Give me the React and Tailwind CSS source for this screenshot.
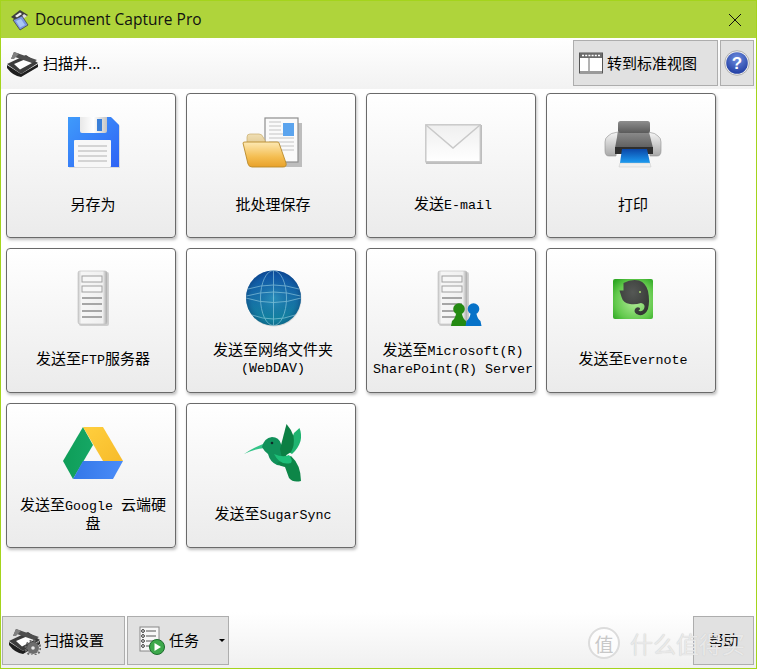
import React from "react";

const L = ({ children }) => (
  <span className="font-['Liberation_Mono',monospace] text-[13.33px] leading-none">{children}</span>
);

const Floppy = () => (
  <svg width="64" height="64" viewBox="0 0 64 64">
    <defs>
      <linearGradient id="fl1" x1="0" y1="0" x2="1" y2="1"><stop offset="0" stopColor="#3f9bfb" /><stop offset="1" stopColor="#2f63f5" /></linearGradient>
      <linearGradient id="fl2" x1="0" y1="0" x2="1" y2="0"><stop offset="0" stopColor="#e8e8e8" /><stop offset="0.5" stopColor="#ffffff" /><stop offset="1" stopColor="#c4c4c4" /></linearGradient>
    </defs>
    <path d="M10 7H53L61 15V57H10Z" fill="#aaa" opacity="0.35" />
    <path d="M9 6H52L60 14V56H9Z" fill="url(#fl1)" />
    <path d="M21 6H48V20Q48 22 46 22H23Q21 22 21 20Z" fill="url(#fl2)" />
    <rect x="38" y="8" width="5" height="12" fill="#3a7fd8" />
    <rect x="15" y="29" width="37" height="27" rx="1" fill="#f7f7f7" />
    <path d="M19 35H48M19 40H48M19 45H48M19 50H48" stroke="#c9c9c9" strokeWidth="1.6" />
  </svg>
);

const FolderDoc = () => (
  <svg width="64" height="64" viewBox="0 0 64 64">
    <defs>
      <linearGradient id="fo1" x1="0" y1="0" x2="0" y2="1"><stop offset="0" stopColor="#fde9b4" /><stop offset="0.6" stopColor="#f4bd50" /><stop offset="1" stopColor="#e8a12a" /></linearGradient>
      <linearGradient id="fo2" x1="0" y1="0" x2="0" y2="1"><stop offset="0" stopColor="#f0dfb4" /><stop offset="1" stopColor="#dcc288" /></linearGradient>
    </defs>
    <rect x="29" y="12" width="34" height="44" fill="#bdbdbd" />
    <rect x="26" y="7" width="33" height="44" fill="#fafafa" stroke="#8e8e8e" strokeWidth="1.2" />
    <path d="M30 11H42M30 15H42M30 19H42M30 23H55M30 27H55M30 31H55M30 35H55M30 39H55" stroke="#c4c4c4" strokeWidth="1" />
    <rect x="44" y="12" width="11" height="13" fill="#5ba4ee" />
    <path d="M8 38V26Q8 23 11 23H20Q23 23 24 26L26 29V38Z" fill="url(#fo2)" stroke="#c9ad6e" strokeWidth="0.7" />
    <path d="M4 32Q4 31 6 31H38Q40 31 40 32L47 52Q48 56 44 56H13Q10 56 9 53Z" fill="url(#fo1)" stroke="#b98a2a" strokeWidth="0.9" />
  </svg>
);

const Envelope = () => (
  <svg width="64" height="64" viewBox="0 0 64 64">
    <defs>
      <linearGradient id="en1" x1="0" y1="0" x2="0" y2="1"><stop offset="0" stopColor="#efefef" /><stop offset="1" stopColor="#ffffff" /></linearGradient>
    </defs>
    <rect x="7" y="14" width="56" height="39" fill="#bdbdbd" />
    <rect x="6.8" y="13.8" width="54.5" height="37" fill="url(#en1)" stroke="#c6c6c6" strokeWidth="1.4" />
    <path d="M7 14L34 37L61 14" fill="none" stroke="#c9c9c9" strokeWidth="1.5" />
  </svg>
);

const Printer = () => (
  <svg width="64" height="64" viewBox="0 0 64 64">
    <defs>
      <linearGradient id="pr1" x1="0" y1="0" x2="0" y2="1"><stop offset="0" stopColor="#8e8e8e" /><stop offset="1" stopColor="#5a5a5a" /></linearGradient>
      <linearGradient id="pr2" x1="0" y1="0" x2="0" y2="1"><stop offset="0" stopColor="#f6f6f6" /><stop offset="1" stopColor="#a8a8a8" /></linearGradient>
      <linearGradient id="pr3" x1="0" y1="0" x2="0" y2="1"><stop offset="0" stopColor="#0b47a8" /><stop offset="1" stopColor="#1c9cf2" /></linearGradient>
      <linearGradient id="pr4" x1="0" y1="0" x2="0" y2="1"><stop offset="0" stopColor="#8c8c8c" /><stop offset="1" stopColor="#5e5e5e" /></linearGradient>
    </defs>
    <path d="M9 25Q11 22 19 21L17 45H10Q6 45 6 40V31Q6 27 9 25Z" fill="url(#pr2)" stroke="#8f8f8f" strokeWidth="0.6" />
    <path d="M59 25Q57 22 49 21L51 45H58Q62 45 62 40V31Q62 27 59 25Z" fill="url(#pr2)" stroke="#8f8f8f" strokeWidth="0.6" />
    <path d="M19 21H50L54 37H16Z" fill="url(#pr4)" />
    <rect x="19" y="10" width="32" height="12" rx="2.5" fill="url(#pr1)" />
    <rect x="16" y="36" width="38" height="7" fill="#2e2e2e" />
    <path d="M23 38H48L51 52H21Z" fill="url(#pr3)" />
    <path d="M21 52H51L52 56H20Z" fill="#efefef" stroke="#bbb" strokeWidth="0.4" />
  </svg>
);

const ServerShape = ({ id }) => (
  <>
    <defs>
      <linearGradient id={id} x1="0" y1="0" x2="1" y2="0"><stop offset="0" stopColor="#c8c8c8" /><stop offset="0.12" stopColor="#f6f6f6" /><stop offset="0.85" stopColor="#f0f0f0" /><stop offset="1" stopColor="#a8a8a8" /></linearGradient>
    </defs>
    <rect x="20" y="6" width="30" height="54" rx="2" fill="#a8a8a8" opacity="0.5" />
    <rect x="19" y="5" width="29" height="53" rx="2" fill={`url(#${id})`} stroke="#bcbcbc" strokeWidth="0.6" />
    <rect x="23" y="10" width="20" height="6" fill="#f7f7f7" stroke="#a0a0a0" />
    <rect x="23" y="20" width="20" height="6" fill="#f7f7f7" stroke="#a0a0a0" />
    <path d="M23 32H43M23 38H43M23 45H43M23 51H43" stroke="#a6a6a6" strokeWidth="2" />
  </>
);

const Server = () => (
  <svg width="64" height="64" viewBox="0 0 64 64"><ServerShape id="sv1" /></svg>
);

const Globe = () => (
  <svg width="64" height="64" viewBox="0 0 64 64">
    <defs>
      <radialGradient id="gl1" cx="0.5" cy="0.5" r="0.55"><stop offset="0" stopColor="#3aa6c8" stopOpacity="0.6" /><stop offset="0.7" stopColor="#17619f" stopOpacity="0.15" /><stop offset="1" stopColor="#062a60" stopOpacity="0.6" /></radialGradient>
      <linearGradient id="gl2" x1="0" y1="0" x2="0" y2="1"><stop offset="0" stopColor="#0d4ea8" /><stop offset="0.5" stopColor="#1670a8" /><stop offset="1" stopColor="#0f8f9c" /></linearGradient>
    </defs>
    <circle cx="35" cy="33" r="27.5" fill="#aaa" opacity="0.4" />
    <circle cx="34.5" cy="32" r="27.5" fill="url(#gl2)" />
    <circle cx="34.5" cy="32" r="27.5" fill="url(#gl1)" />
    <g fill="none" stroke="#a9dcea" strokeWidth="0.9" opacity="0.6">
      <ellipse cx="34.5" cy="32" rx="13" ry="27.5" />
      <path d="M34.5 4.5V59.5" />
      <path d="M9 23Q34.5 15 60 23" />
      <path d="M7 32Q34.5 41 62 32" />
      <path d="M7.5 30Q34.5 22 61.5 30" />
      <path d="M13 49Q34.5 57 56 49" />
    </g>
  </svg>
);

const Person = ({ x, c }) => (
  <g fill={c}>
    <circle cx={x} cy="43" r="5.8" />
    <path d={`M${x - 3} 48H${x + 3}Q${x + 4} 53 ${x + 7} 55L${x + 8} 60H${x - 8}L${x - 7} 55Q${x - 4} 53 ${x - 3} 48Z`} />
  </g>
);

const SharePoint = () => (
  <svg width="64" height="64" viewBox="0 0 64 64">
    <ServerShape id="sv2" />
    <Person x={40} c="#248a12" />
    <Person x={54.5} c="#0772c8" />
  </svg>
);

const Evernote = () => (
  <svg width="64" height="64" viewBox="0 0 64 64">
    <defs>
      <radialGradient id="ev1" cx="0.55" cy="0.55" r="0.7"><stop offset="0" stopColor="#b4ec9a" /><stop offset="0.7" stopColor="#62c94c" /><stop offset="1" stopColor="#2fa824" /></radialGradient>
      <radialGradient id="ev2" cx="0.45" cy="0.35" r="0.7"><stop offset="0" stopColor="#555855" /><stop offset="1" stopColor="#333633" /></radialGradient>
    </defs>
    <rect x="14" y="13" width="40" height="40" rx="2" fill="url(#ev1)" />
    <path d="M24.5 17Q32 13 40 14.5Q47 17 49 25Q51 35 49 43Q46 50 40 49Q34 47 36 43Q38 40 41 42Q41 45 39 44Q42 47 45 43Q47 38 42 37Q36 39 31 38Q24 37 22.5 31L20.5 24.5H24.5Z" fill="url(#ev2)" />
    <circle cx="41" cy="26" r="1" fill="#a8dd6f" />
  </svg>
);

const Drive = () => (
  <svg width="64" height="64" viewBox="0 0 64 64">
    <defs>
      <linearGradient id="dr1" x1="0" y1="0" x2="1" y2="0"><stop offset="0" stopColor="#0e9d58" /><stop offset="1" stopColor="#16a765" /></linearGradient>
      <linearGradient id="dr2" x1="0" y1="0" x2="1" y2="1"><stop offset="0" stopColor="#ffcf3e" /><stop offset="1" stopColor="#f7bb2a" /></linearGradient>
      <linearGradient id="dr3" x1="0" y1="0" x2="1" y2="0"><stop offset="0" stopColor="#3477e8" /><stop offset="1" stopColor="#4a8cf8" /></linearGradient>
    </defs>
    <path d="M24 6L4 40L14 58L34 24Z" fill="url(#dr1)" />
    <path d="M24 6H44L64 40H44Z" fill="url(#dr2)" />
    <path d="M24 40H64L54 58H14Z" fill="url(#dr3)" />
  </svg>
);

const Bird = () => (
  <svg width="64" height="64" viewBox="0 0 64 64">
    <path d="M5 33Q14 27 24 23L26 27Q15 28 5 33Z" fill="#35c489" />
    <path d="M55 12L60.5 7Q63 13 61.5 20Q59 28 53 33L48 30Z" fill="#1fb470" />
    <path d="M23 26Q25 17 33 16Q40 16 42 23L48 36L50 46L38 44Q31 41 29 33Q25 30 23 26Z" fill="#11915a" />
    <circle cx="33" cy="22" r="1.3" fill="#0e2a2a" />
    <path d="M41 28L47.5 3Q52 8 54.5 15Q56 24 52 31L43 37Z" fill="#0b7f43" />
    <path d="M38 42L52 35Q62 44 62 60Q54 62 50 57L46 46Q41 45 38 42Z" fill="#0d8648" />
    <path d="M35 33Q44 37 50 34Q54 39 52 42Q41 45 35 33Z" fill="#1dbf78" />
  </svg>
);

const ScannerGlyph = ({ gear }) => (
  <svg width="32" height="28" viewBox="0 0 32 28">
    <path d="M0 14L19 5L31 13L14 24Z" fill="#3c3c3c" />
    <path d="M0 15L14 24L31 14V17L14 27Q6 26 0 18Z" fill="#1e1e1e" />
    <path d="M7 14L20 8.5L25 13L13 19.5Z" fill="#fff" />
    <path d="M4 9L7 2L30 10L25 13L8 7Z" fill="#4e4e4e" />
    <path d="M4 9L7 2L12 3.8L7 9Z" fill="#808080" />
    {gear && (
      <g>
        <circle cx="24" cy="21" r="6" fill="#6d6d6d" />
        <circle cx="24" cy="21" r="7.4" fill="none" stroke="#6d6d6d" strokeWidth="2" strokeDasharray="2 1.9" />
        <circle cx="24" cy="21" r="1.8" fill="#e8e8e8" />
      </g>
    )}
  </svg>
);

const AppLogo = () => (
  <svg width="20" height="22" viewBox="0 0 20 22">
    <path d="M1 8L10 1L18 6L9 13Z" fill="#3f3f3f" />
    <path d="M5 7L10 3.5L12 5L7 8.5Z" fill="#eee" />
    <path d="M10 9L14 5L17 7L12 11Z" fill="#ddd" />
    <path d="M3 11L12 7L18 16L10 21Z" fill="#7b97e6" stroke="#444" strokeWidth="0.8" />
    <path d="M6 12L11 10L15 16L10 18.5Z" fill="#a9c8f4" />
  </svg>
);

const Card = ({ icon, children }) => (
  <button className="w-[170px] h-[145px] flex flex-col items-center pt-[17px] rounded-[4px] border border-[#6a6a6a] bg-gradient-to-b from-white to-[#ebebeb] shadow-[1px_2px_3px_rgba(0,0,0,0.25)]">
    <div className="w-16 h-16 shrink-0">{icon}</div>
    <div className="mt-[11px] pl-1 h-[34px] w-full flex items-center justify-center text-center leading-[17px] text-[15px] text-black">
      <span>{children}</span>
    </div>
  </button>
);

const Tool = ({ className, children }) => (
  <button className={`flex items-center bg-[#e1e1e1] border border-[#adadad] text-[15px] text-black ${className}`}>
    {children}
  </button>
);

export default function App() {
  return (
    <div className="relative w-[757px] h-[669px] flex flex-col overflow-hidden bg-white border border-[#a4d41c] font-['Noto_Sans_CJK_SC',sans-serif]">
      <div className="h-[37px] shrink-0 bg-[#afd43b] flex items-center pl-[9px] pr-[14px]">
        <AppLogo />
        <span className="ml-[5px] text-[15.5px] text-[#111] font-['Open_Sans',sans-serif]">Document Capture Pro</span>
        <svg className="ml-auto" width="14" height="14" viewBox="0 0 14 14">
          <path d="M1 1L13 13M13 1L1 13" stroke="#111" strokeWidth="1" />
        </svg>
      </div>

      <div className="h-[51px] shrink-0 flex items-start bg-gradient-to-b from-white to-[#f2f2f2] pl-[6px] pr-[2px] pt-[2px]">
        <div className="self-center -mt-[2px]"><ScannerGlyph /></div>
        <span className="self-center -mt-[2px] ml-[4px] text-[15px] text-black">扫描并...</span>
        <Tool className="ml-auto w-[145px] h-[46px] pl-[5px]">
          <svg width="24" height="24" viewBox="0 0 24 24">
            <rect x="0.5" y="2" width="23" height="20" fill="#fff" stroke="#555" />
            <rect x="1" y="2" width="22" height="5" fill="#6b6b6b" />
            <path d="M3 4.5H21" stroke="#fff" strokeWidth="1.5" strokeDasharray="2 1.2" />
            <path d="M10 7V21" stroke="#666" />
            <rect x="1" y="20" width="22" height="2" fill="#9a9a9a" />
          </svg>
          <span className="ml-[4px] whitespace-nowrap">转到标准视图</span>
        </Tool>
        <Tool className="ml-[2px] w-[34px] h-[46px] justify-center">
          <svg width="26" height="26" viewBox="0 0 26 26">
            <defs>
              <radialGradient id="hp1" cx="0.5" cy="0.3" r="0.8"><stop offset="0" stopColor="#6f8fe0" /><stop offset="1" stopColor="#16329a" /></radialGradient>
            </defs>
            <circle cx="13" cy="13" r="12.3" fill="#eee" stroke="#9a9a9a" strokeWidth="0.7" />
            <circle cx="13" cy="13" r="10.8" fill="url(#hp1)" />
            <text x="13" y="19" textAnchor="middle" fontSize="17" fontWeight="700" fill="#fff" fontFamily="'Liberation Sans', sans-serif">?</text>
          </svg>
        </Tool>
      </div>

      <div className="flex-1 pl-[5px] pt-[4px] grid grid-cols-[repeat(4,170px)] auto-rows-[145px] gap-[10px] content-start">
        <Card icon={<Floppy />}>另存为</Card>
        <Card icon={<FolderDoc />}>批处理保存</Card>
        <Card icon={<Envelope />}>发送<L>E-mail</L></Card>
        <Card icon={<Printer />}>打印</Card>
        <Card icon={<Server />}>发送至<L>FTP</L>服务器</Card>
        <Card icon={<Globe />}>发送至网络文件夹<br /><L>(WebDAV)</L></Card>
        <Card icon={<SharePoint />}>发送至<L>Microsoft(R)</L><br /><L>SharePoint(R) Server</L></Card>
        <Card icon={<Evernote />}>发送至<L>Evernote</L></Card>
        <Card icon={<Drive />}>发送至<L>Google </L>云端硬<br />盘</Card>
        <Card icon={<Bird />}>发送至<L>SugarSync</L></Card>
      </div>

      <div className="h-[56px] shrink-0 flex items-start pl-[1px] pr-[2px] pt-[4px] bg-gradient-to-b from-white to-[#f0f0f0]">
        <Tool className="w-[123px] h-[49px] pl-[6px]">
          <ScannerGlyph gear />
          <span className="ml-[3px] whitespace-nowrap">扫描设置</span>
        </Tool>
        <Tool className="ml-[2px] w-[102px] h-[49px] pl-[11px]">
          <svg width="26" height="30" viewBox="0 0 26 30">
            <rect x="1" y="1" width="19" height="24" fill="#f7f7f7" stroke="#888" />
            <path d="M7 5H17M7 10H17M7 15H17M7 20H11" stroke="#555" />
            <circle cx="4" cy="5" r="1.4" fill="none" stroke="#333" />
            <circle cx="4" cy="10" r="1.4" fill="none" stroke="#333" />
            <circle cx="4" cy="15" r="1.4" fill="none" stroke="#333" />
            <circle cx="4" cy="20" r="1.4" fill="none" stroke="#333" />
            <circle cx="18" cy="21" r="7.5" fill="#3da84b" stroke="#1b6b2c" />
            <path d="M15.5 17V25L22 21Z" fill="#fff" />
          </svg>
          <span className="ml-[4px] whitespace-nowrap">任务</span>
          <span className="ml-auto mr-[3px] w-0 h-0 border-x-[3px] border-x-transparent border-t-[3px] border-t-black" />
        </Tool>
        <Tool className="ml-auto w-[61px] h-[49px] justify-center">帮助</Tool>
      </div>

      <div className="absolute left-[587px] top-[626px] flex items-center pointer-events-none">
        <span className="w-8 h-8 rounded-full bg-white/70 border-2 border-[#dcdcdc] flex items-center justify-center text-[19px] leading-none text-[#c8c8c8]">值</span>
        <span className="ml-[10px] text-[23px] leading-none whitespace-nowrap text-[#eeeeee]/90 [text-shadow:0_0_1px_#c0c0c0]">什么值得买</span>
      </div>
    </div>
  );
}
